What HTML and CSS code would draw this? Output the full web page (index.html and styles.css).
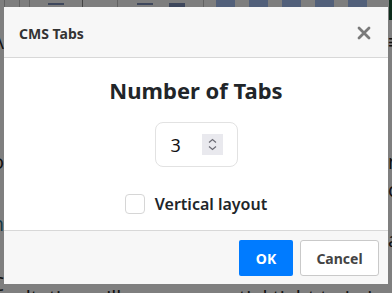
FILE: index.html
```html
<!DOCTYPE html>
<html>
<head>
<meta charset="utf-8">
<link rel="stylesheet" href="styles.css">
</head>
<body>
<div class="page">
  <div class="toolbar">
    <span class="tb-cell w5"></span>
    <span class="tb-cell w15"></span>
    <span class="tb-cell w10"></span>
    <span class="tb-cell w53"><i class="dash"></i></span>
    <span class="tb-cell w35"></span>
    <span class="tb-cell w86"><i class="dash"></i><i class="dash double"></i></span>
    <span class="tb-group">
      <span class="tb-blue"></span><span class="tb-blue"></span><span class="tb-blue"></span><span class="tb-blue"></span><span class="tb-blue"></span>
    </span>
    <span class="tb-edge"></span>
  </div>
  <div class="content">
    <div class="edge left">
      <span class="frag f1">\</span>
      <span class="frag f2">o</span>
      <span class="frag f3 teal">n</span>
      <span class="frag f4">C</span>
    </div>
    <div class="middle"></div>
    <div class="edge right">
      <span class="frag f1">≡</span>
      <span class="frag f2">n</span>
      <span class="frag f5">c</span>
      <span class="frag f4">a</span>
    </div>
  </div>
  <p class="bottom-line">consultation will prove essential tight to in including dedicated</p>
</div>
<div class="overlay"></div>
<div class="modal">
  <div class="modal-header">
    <span class="modal-title">CMS Tabs</span>
    <svg class="close" width="14" height="14" viewBox="0 0 14 14">
      <path d="M2 2 L12 12 M12 2 L2 12" stroke="#7a7a7a" stroke-width="2.8" stroke-linecap="round"/>
    </svg>
  </div>
  <div class="modal-body">
    <h2 class="heading">Number of Tabs</h2>
    <div class="number-box">
      <span class="number">3</span>
      <span class="spinner">
        <svg width="21" height="21" viewBox="0 0 21 21">
          <path d="M7 8.5 L10.5 5.5 L14 8.5" fill="none" stroke="#6b6b74" stroke-width="1.2"/>
          <path d="M7 12.5 L10.5 15.5 L14 12.5" fill="none" stroke="#6b6b74" stroke-width="1.2"/>
        </svg>
      </span>
    </div>
    <label class="check-row">
      <span class="checkbox"></span>
      <span class="check-label">Vertical layout</span>
    </label>
  </div>
  <div class="modal-footer">
    <button class="btn btn-ok">OK</button>
    <button class="btn btn-cancel">Cancel</button>
  </div>
</div>
</body>
</html>
```

FILE: styles.css
```css
html, body {
  margin: 0;
  padding: 0;
  width: 392px;
  height: 293px;
  overflow: hidden;
  background: #ffffff;
  font-family: "Noto Sans", "Open Sans", sans-serif;
}
.page {
  width: 392px;
  height: 293px;
  overflow: hidden;
  display: flex;
  flex-direction: column;
}
.toolbar {
  display: flex;
  align-items: stretch;
  height: 20px;
  flex: none;
  background: #fdfdfd;
}
.tb-cell {
  flex: none;
  border-right: 1px solid #c4c4c4;
  display: flex;
  align-items: flex-start;
  justify-content: center;
  gap: 16px;
  padding-top: 2px;
  box-sizing: border-box;
}
.w5 { width: 5px; }
.w15 { width: 15px; }
.w10 { width: 10px; }
.w53 { width: 53px; border-right-color: #888; }
.w35 { width: 35px; }
.w86 { width: 86px; }
.dash {
  display: block;
  width: 16px;
  height: 2px;
  margin-top: 1px;
  background: #7d8fb8;
}
.dash.double {
  height: 1px;
  border-bottom: 1px solid #7d8fb8;
  padding-bottom: 2px;
  background: #7d8fb8;
}
.tb-group {
  flex: none;
  display: flex;
  gap: 14px;
  padding-left: 12px;
  width: 172px;
  box-sizing: border-box;
}
.tb-blue {
  flex: none;
  width: 19px;
  height: 20px;
  background: #a4c0f4;
}
.tb-edge {
  flex: 1;
  border-right: 3px solid #1d5a3a;
}
.content {
  flex: 1;
  display: grid;
  grid-template-columns: 4px 1fr 4px;
  font-family: "Open Sans", sans-serif;
  font-size: 20px;
  color: #222;
}
.edge {
  overflow: hidden;
  display: flex;
  flex-direction: column;
}
.edge.left { align-items: flex-end; }
.edge.right { align-items: flex-start; }
.frag { line-height: 20px; }
.f1 { margin-top: 12px; }
.f2 { margin-top: 100px; }
.f3 { margin-top: 42px; }
.f4 { margin-top: 40px; }
.f5 { margin-top: 8px; margin-bottom: -10px; }
.teal { color: #2a6f8a; }
.bottom-line {
  margin: -9px 0 0 -30px;
  height: 9px;
  font-family: "Open Sans", sans-serif;
  font-size: 20px;
  line-height: 26px;
  color: #222;
  white-space: nowrap;
  flex: none;
}
.overlay {
  position: fixed;
  inset: 0;
  background: rgba(0, 0, 0, 0.5);
}
.modal {
  position: absolute;
  left: 4px;
  top: 7px;
  width: 384px;
  height: 277px;
  background: #fff;
  display: flex;
  flex-direction: column;
}
.modal-header {
  height: 50px;
  flex: none;
  background: #f7f7f7;
  border-bottom: 1px solid #d8d8d8;
  display: flex;
  align-items: center;
  justify-content: space-between;
  padding: 0 17px 0 15px;
}
.modal-title {
  font-size: 14px;
  font-weight: 700;
  color: #333;
  padding-top: 2px;
}
.close {
  margin-top: 1px;
}
.modal-body {
  height: 172px;
  flex: none;
  border-bottom: 1px solid #d8d8d8;
  display: flex;
  flex-direction: column;
  align-items: center;
}
.heading {
  margin: 17px 0 0 0;
  font-size: 22px;
  line-height: 30px;
  font-weight: 700;
  color: #212529;
}
.number-box {
  margin-top: 17px;
  height: 43px;
  border: 1px solid #e2e2e2;
  border-radius: 8px;
  display: flex;
  align-items: center;
  padding-left: 15px;
  width: 66px;
}
.number {
  font-size: 18px;
  color: #111;
  width: 31px;
}
.spinner {
  width: 21px;
  height: 21px;
  background: #e9e9ee;
  display: flex;
}
.check-row {
  margin-top: 26px;
  display: flex;
  align-items: center;
  gap: 10px;
}
.checkbox {
  width: 18px;
  height: 18px;
  border: 1px solid #d6d6d6;
  border-radius: 4px;
  background: #fff;
}
.check-label {
  font-size: 16px;
  font-weight: 600;
  color: #212529;
}
.modal-footer {
  flex: 1;
  background: #f7f7f7;
  display: flex;
  justify-content: flex-end;
  align-items: flex-start;
  padding: 9px 9px 0 0;
  gap: 7px;
}
.btn {
  height: 36px;
  font-family: "Noto Sans", "Open Sans", sans-serif;
  font-size: 14px;
  font-weight: 700;
  border-radius: 2px;
  padding: 0;
  cursor: pointer;
}
.btn-ok {
  width: 54px;
  background: #007bff;
  color: #fff;
  border: none;
}
.btn-cancel {
  width: 79px;
  background: #fff;
  color: #444;
  border: 1px solid #c9c9c9;
  border-radius: 3px;
}
```
